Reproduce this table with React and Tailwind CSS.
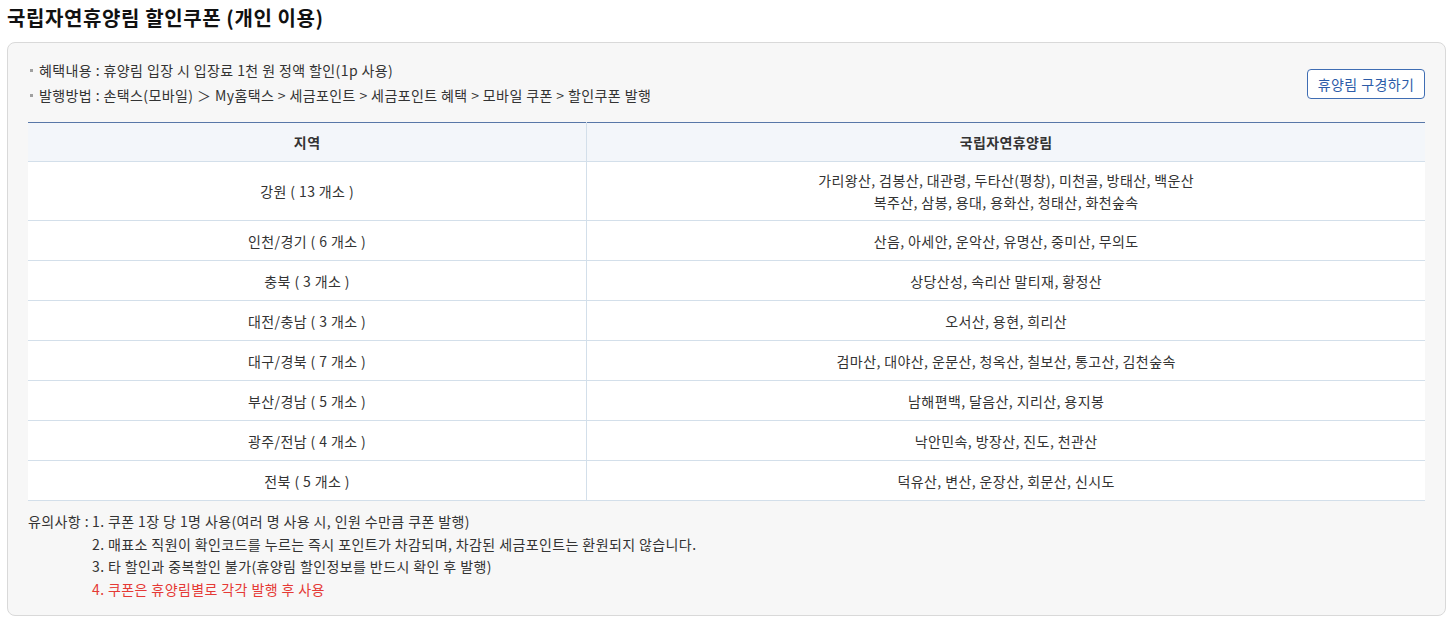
const rows = [
    {region: "강원 ( 13 개소 )", forests: ["가리왕산, 검봉산, 대관령, 두타산(평창), 미천골, 방태산, 백운산", "복주산, 삼봉, 용대, 용화산, 청태산, 화천숲속"]},
    {region: "인천/경기 ( 6 개소 )", forests: ["산음, 아세안, 운악산, 유명산, 중미산, 무의도"]},
    {region: "충북 ( 3 개소 )", forests: ["상당산성, 속리산 말티재, 황정산"]},
    {region: "대전/충남 ( 3 개소 )", forests: ["오서산, 용현, 희리산"]},
    {region: "대구/경북 ( 7 개소 )", forests: ["검마산, 대야산, 운문산, 청옥산, 칠보산, 통고산, 김천숲속"]},
    {region: "부산/경남 ( 5 개소 )", forests: ["남해편백, 달음산, 지리산, 용지봉"]},
    {region: "광주/전남 ( 4 개소 )", forests: ["낙안민속, 방장산, 진도, 천관산"]},
    {region: "전북 ( 5 개소 )", forests: ["덕유산, 변산, 운장산, 회문산, 신시도"]},
];

const notes = [
    {text: "1. 쿠폰 1장 당 1명 사용(여러 명 사용 시, 인원 수만큼 쿠폰 발행)"},
    {text: "2. 매표소 직원이 확인코드를 누르는 즉시 포인트가 차감되며, 차감된 세금포인트는 환원되지 않습니다."},
    {text: "3. 타 할인과 중복할인 불가(휴양림 할인정보를 반드시 확인 후 발행)"},
    {text: "4. 쿠폰은 휴양림별로 각각 발행 후 사용", red: true},
];

function Bullet({label, children}) {
    return (
        <li className="flex items-center leading-[25px]">
            <span className="w-[3px] h-[3px] bg-[#a0a0a0] mr-[6px] ml-[2px]"></span>
            <span>{label} : {children}</span>
        </li>
    );
}

export default function App() {
    return (
        <div className="bg-white text-[#333] font-['Noto_Sans_CJK_KR','Noto_Sans',sans-serif] text-[14px] tracking-[0.4px] pb-[7px]">
            <h1 className="pl-[7px] pt-[3px] h-[42px] text-[20px] tracking-[0.6px] font-bold text-[#111] leading-[30px]">
                국립자연휴양림 할인쿠폰 (개인 이용)
            </h1>

            <div className="ml-[7px] mr-[4px] border border-[#d9d9d9] rounded-[8px] bg-[#f7f7f7] px-[20px] pt-[15px] pb-[14px]">
                {/* 안내 + 버튼 */}
                <div className="flex items-center justify-between">
                    <ul>
                        <Bullet label="혜택내용">휴양림 입장 시 입장료 1천 원 정액 할인(1p 사용)</Bullet>
                        <Bullet label="발행방법">손택스(모바일) ＞ My홈택스 &gt; 세금포인트 &gt; 세금포인트 혜택 &gt; 모바일 쿠폰 &gt; 할인쿠폰 발행</Bullet>
                    </ul>
                    <button className="h-[30px] w-[118px] border border-[#3f6db3] rounded-[4px] bg-white text-[#2c5ca8] mt-[2px]">
                        휴양림 구경하기
                    </button>
                </div>

                {/* 표 */}
                <table className="w-full mt-[14px] border-collapse border-t border-t-[#5877a8] bg-white text-center">
                    <thead>
                    <tr className="bg-[#f3f6fa] h-[39px] border-b border-[#d3dfea]">
                        <th className="w-[40%] font-semibold border-r border-[#d3dfea]">지역</th>
                        <th className="font-semibold">국립자연휴양림</th>
                    </tr>
                    </thead>
                    <tbody>
                    {rows.map((row, i) => (
                        <tr key={i} className="h-[40px] border-b border-[#d3dfea]">
                            <td className="border-r border-[#d3dfea] leading-[22px]">{row.region}</td>
                            <td className={`leading-[22px] ${row.forests.length > 1 ? "py-[7px]" : ""}`}>
                                {row.forests.map((f, j) => (
                                    <div key={j}>{f}</div>
                                ))}
                            </td>
                        </tr>
                    ))}
                    </tbody>
                </table>

                {/* 유의사항 */}
                <div className="flex mt-[9px] leading-[22.7px]">
                    <span className="shrink-0 w-[64px] whitespace-nowrap">유의사항 :</span>
                    <ul>
                        {notes.map((n, i) => (
                            <li key={i} className={n.red ? "text-[#e53935]" : ""}>{n.text}</li>
                        ))}
                    </ul>
                </div>
            </div>
        </div>
    );
}
